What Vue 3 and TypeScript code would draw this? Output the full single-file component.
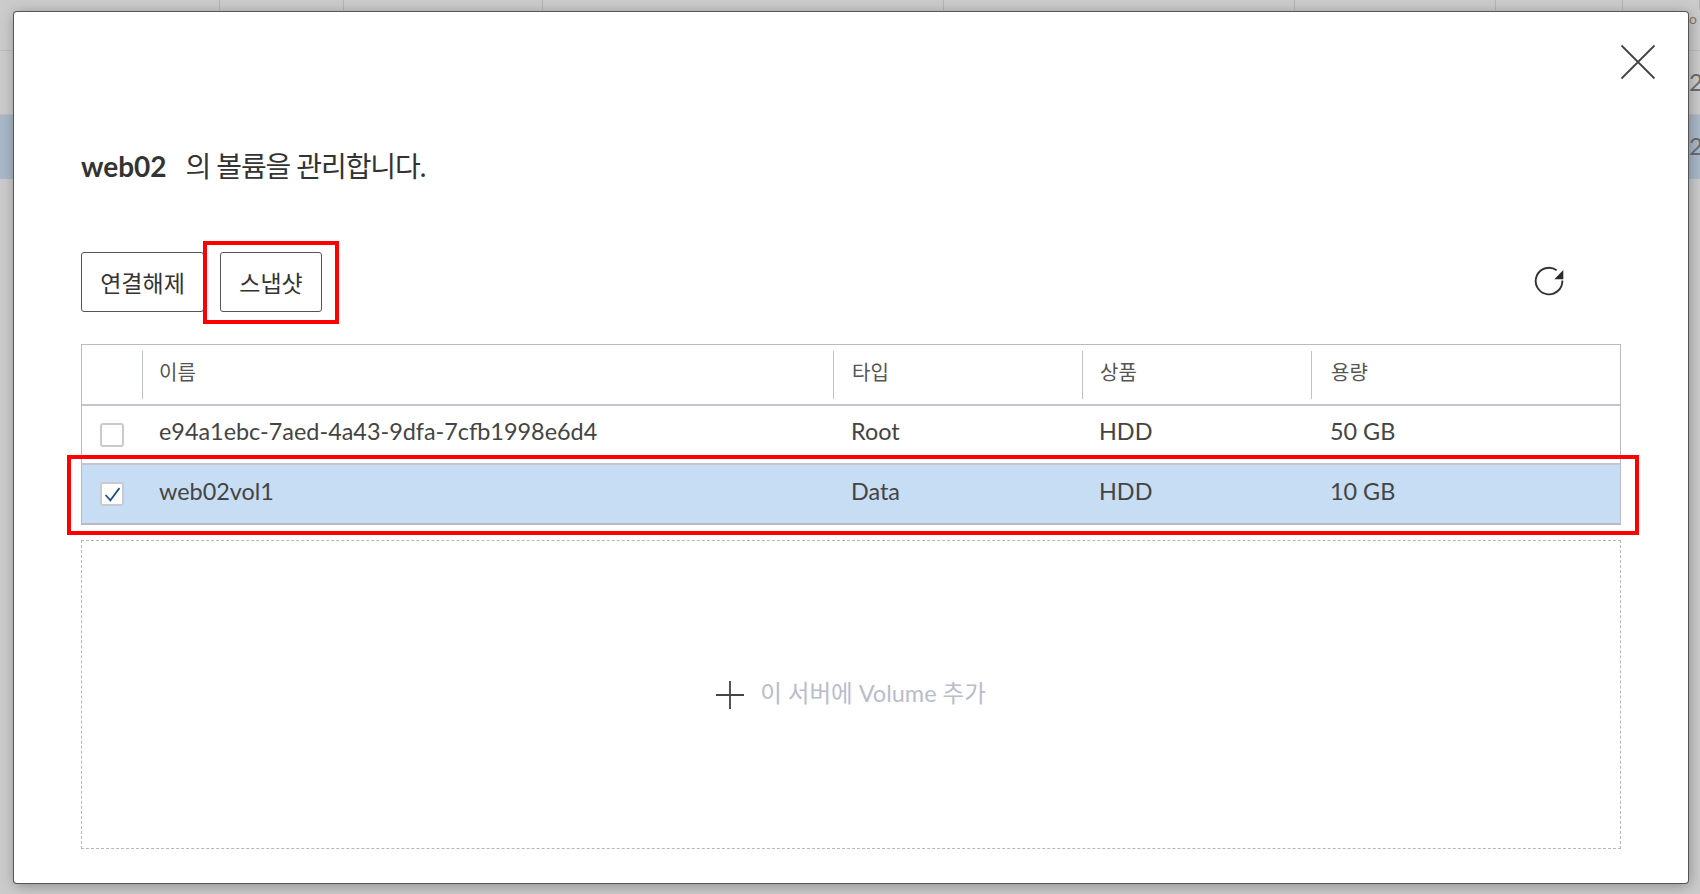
<script setup lang="ts">
interface Volume {
  name: string
  type: string
  product: string
  size: string
  checked: boolean
}
const columns = ['이름', '타입', '상품', '용량']
const volumes: Volume[] = [
  { name: 'e94a1ebc-7aed-4a43-9dfa-7cfb1998e6d4', type: 'Root', product: 'HDD', size: '50 GB', checked: false },
  { name: 'web02vol1', type: 'Data', product: 'HDD', size: '10 GB', checked: true },
]
const bgCols = [0, 1, 2, 3, 4, 5, 6, 7]
</script>

<template>
  <div class="page">
    <div class="backdrop">
      <div class="bg-row bg-top">
        <span v-for="c in bgCols" :key="c" class="bg-cell"></span>
        <span class="bg-small">o</span>
      </div>
      <div class="bg-row bg-mid"><span class="bg-digit">2</span></div>
      <div class="bg-row bg-sel"><span class="bg-digit">2</span></div>
    </div>

    <section class="modal">
      <button class="close" aria-label="닫기">
        <svg width="36" height="36" viewBox="0 0 36 36"><path d="M1.500 1.500 34.500 34.500M34.500 1.500 1.500 34.500" stroke="#444" stroke-width="1.800" fill="none" /></svg>
      </button>

      <h1 class="title"><strong>web02</strong><span class="title-rest">의 볼륨을 관리합니다.</span></h1>

      <div class="toolbar">
        <button class="btn btn-first">연결해제</button>
        <div class="snap-wrap">
          <button class="btn btn-snap">스냅샷</button>
          <i class="mark mark-btn"></i>
        </div>
        <button class="refresh" aria-label="새로고침">
          <svg width="30" height="30" viewBox="0 0 30 30">
            <path d="M28.300 14.500A13.300 13.300 0 1 1 22.700 4.200" stroke="#333" stroke-width="1.900" fill="none" />
            <path d="M29.300 4V13.300H20.300Z" fill="#2b2b2b" />
          </svg>
        </button>
      </div>

      <div class="table">
        <div class="row head">
          <div class="cell check"></div>
          <div v-for="c in columns" :key="c" class="cell th"><span>{{ c }}</span></div>
        </div>
        <div v-for="v in volumes" :key="v.name" class="row body" :class="{ selected: v.checked }">
          <div class="cell check">
            <span class="box">
              <svg v-if="v.checked" width="17" height="17" viewBox="0 0 16 16"><path d="M1.500 8.500 6 13.500 14.500 2" stroke="#1e4d8c" stroke-width="1.600" fill="none" /></svg>
            </span>
          </div>
          <div class="cell td">{{ v.name }}</div>
          <div class="cell td">{{ v.type }}</div>
          <div class="cell td">{{ v.product }}</div>
          <div class="cell td">{{ v.size }}</div>
        </div>
        <i class="mark mark-row"></i>
      </div>

      <div class="add">
        <svg width="28" height="28" viewBox="0 0 28 28"><path d="M0 14H28M14 0V28" stroke="#444" stroke-width="1.800" fill="none" /></svg>
        <span class="add-label">이 서버에 Volume 추가</span>
      </div>
    </section>
  </div>
</template>

<style scoped>
.page {
  position: relative;
  width: 1700px;
  height: 894px;
  overflow: hidden;
  background: #cbcbcb;
  font-family: Lato, "Noto Sans CJK KR", sans-serif;
}
.backdrop {
  display: flex;
  flex-direction: column;
}
.bg-row {
  position: relative;
  border-bottom: 1px solid #bdbdbd;
}
.bg-top {
  display: grid;
  grid-template-columns: 220px 124px 199px 401px 351px 201px 127px 77px;
  height: 50px;
}
.bg-cell {
  height: 10px;
  border-right: 1px solid #b4b4b8;
}
.bg-small {
  position: absolute;
  left: 1689px;
  top: 10px;
  font-size: 14px;
  line-height: 18px;
  color: #8a7a68;
}
.bg-mid {
  height: 63px;
}
.bg-sel {
  height: 64px;
  background: #a9b8c8;
  border-bottom: 0;
}
.bg-digit {
  position: absolute;
  left: 1689px;
  top: 16px;
  font-size: 24px;
  color: #6b6b70;
}
.modal {
  position: absolute;
  left: 14px;
  top: 12px;
  width: 1674px;
  height: 871px;
  box-sizing: border-box;
  padding: 0 67px;
  display: flex;
  flex-direction: column;
  background: #fff;
  border-radius: 3px;
  box-shadow: 0 0 0 1px #555, 1px 2px 14px rgba(0, 0, 0, 0.35);
}
button {
  font-family: inherit;
  background: none;
  border: 0;
  padding: 0;
}
.close {
  position: absolute;
  top: 32px;
  right: 32px;
  width: 36px;
  height: 36px;
}
.title {
  margin: 133px 0 0;
  height: 42px;
  display: flex;
  align-items: center;
  gap: 19px;
  font-size: 28px;
  font-weight: 400;
  line-height: 42px;
  color: #333;
}
.title strong {
  font-weight: 700;
}
.title-rest {
  letter-spacing: -1.100px;
}
.toolbar {
  margin-top: 65px;
  height: 60px;
  display: flex;
  align-items: stretch;
}
.btn {
  box-sizing: border-box;
  height: 60px;
  border: 1px solid #555;
  border-radius: 3px;
  background: #fff;
  color: #333;
  font-size: 23px;
}
.btn-first {
  width: 123px;
}
.snap-wrap {
  position: relative;
  margin-left: 16px;
}
.btn-snap {
  width: 102px;
}
.mark {
  position: absolute;
  box-sizing: border-box;
  border: 4px solid #f00;
  pointer-events: none;
}
.mark-btn {
  left: -17px;
  top: -11px;
  width: 136px;
  height: 83px;
}
.refresh {
  margin: 0 0 0 auto;
  position: relative;
  right: 57px;
  width: 30px;
  height: 60px;
}
.table {
  position: relative;
  margin-top: 32px;
  box-sizing: border-box;
  width: 1540px;
  border: 1px solid #b9b9c9;
  border-bottom-width: 2px;
}
.row {
  display: grid;
  grid-template-columns: 60px 691px 249px 229px 1fr;
  align-items: center;
  border-bottom: 2px solid #c5c5d1;
}
.row:last-of-type {
  border-bottom: 0;
}
.head {
  height: 59px;
}
.body {
  height: 57px;
}
.selected {
  background: #c7ddf3;
  height: 58px;
}
.cell {
  box-sizing: border-box;
}
.cell:nth-child(2) {
  padding-left: 16px;
}
.cell:nth-child(3) {
  padding-left: 18px;
}
.cell:nth-child(4) {
  padding-left: 17px;
}
.cell:nth-child(5) {
  padding-left: 19px;
}
.td:nth-child(2) {
  padding-left: 17px;
}
.check {
  display: flex;
  justify-content: center;
}
.th {
  height: 48px;
  display: flex;
  align-items: center;
  padding-bottom: 6px;
  border-left: 1px solid #c0c0cc;
  font-size: 20px;
  color: #555;
}
.td {
  padding-bottom: 7px;
  font-size: 23.400px;
  color: #444;
}
.box {
  box-sizing: border-box;
  width: 24px;
  height: 24px;
  display: flex;
  align-items: center;
  justify-content: center;
  background: #fff;
  border: 2px solid #c9c9d4;
  border-radius: 3px;
}
.mark-row {
  left: -15px;
  top: 110px;
  width: 1572px;
  height: 80px;
}
.add {
  margin-top: 15px;
  width: 1540px;
  height: 309px;
  box-sizing: border-box;
  border: 1px dashed #b5b5c5;
  display: flex;
  align-items: center;
  justify-content: center;
  gap: 16px;
  font-size: 23.500px;
  color: #b9bccb;
}
.add-label {
  margin-bottom: 5px;
}
</style>

<style>
html, body {
  margin: 0;
  background: #cbcbcb;
}
</style>
